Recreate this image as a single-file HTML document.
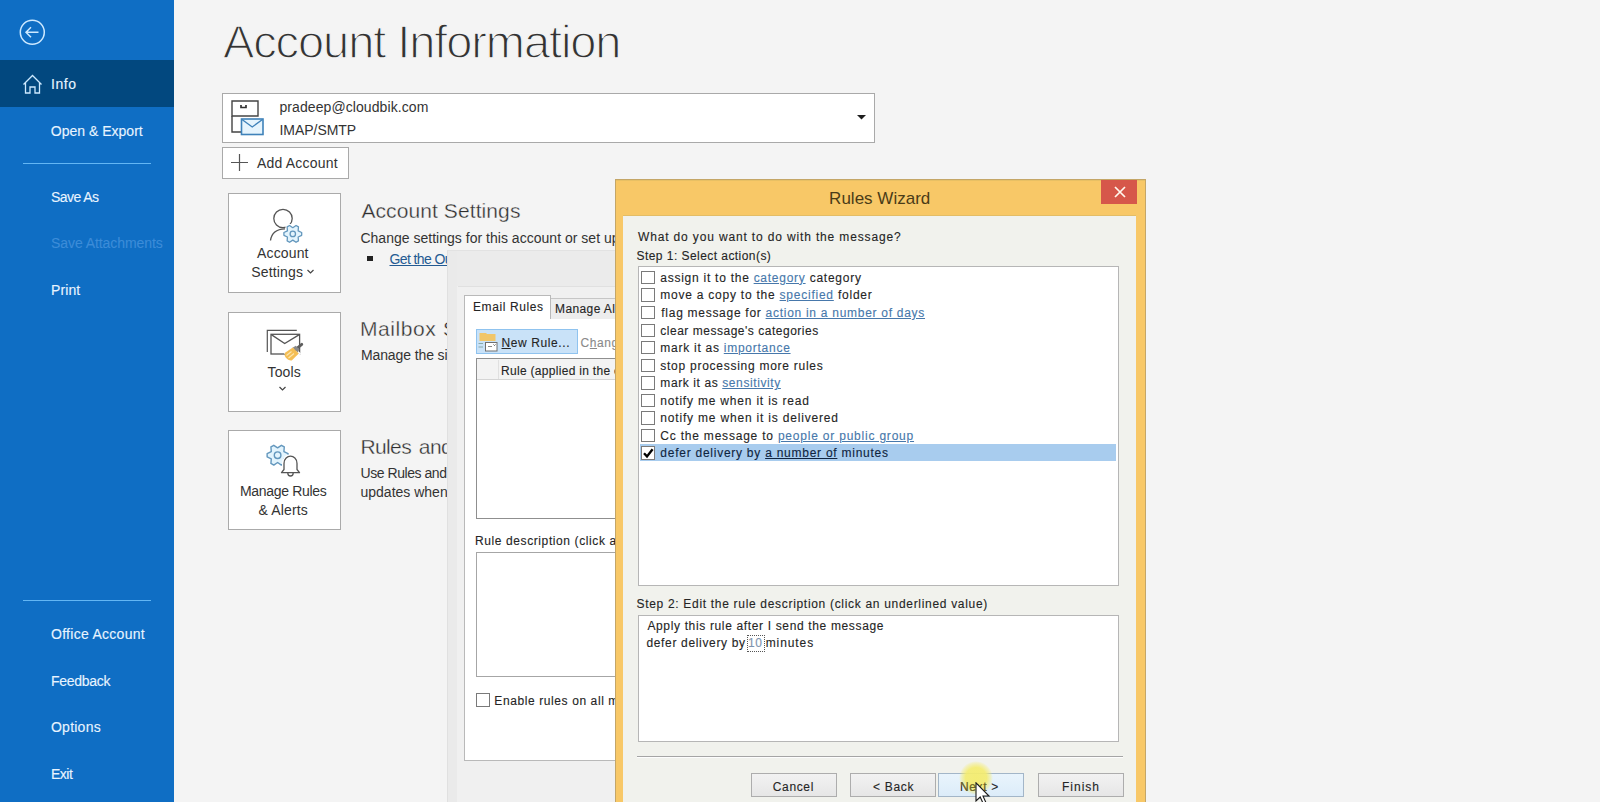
<!DOCTYPE html>
<html><head><meta charset="utf-8">
<style>
*{margin:0;padding:0;box-sizing:border-box}
html,body{width:1600px;height:802px;overflow:hidden;background:#f4f4f4;font-family:"Liberation Sans",sans-serif}
.a{position:absolute}
.t{position:absolute;white-space:nowrap;line-height:normal}
.d{-webkit-text-stroke:0.12px currentColor}
.sep{position:absolute;left:23px;width:128px;height:1.5px;background:#63b6f4}
.tile{position:absolute;left:228px;width:113px;height:100px;background:#fff;border:1px solid #aaaaaa}
.cb{position:absolute;width:14px;height:14px;border:1px solid #7a7a7a;background:#fff}
.lk{color:#4778ab;text-decoration:underline}
.lk2{color:#0f2440;text-decoration:underline}
.lk3{text-decoration:none}
.btn{position:absolute;top:773px;height:24px;background:linear-gradient(#f2f2f2,#e6e6e6);border:1px solid #adadad}
</style></head><body>

<!-- ============ Sidebar ============ -->
<div class="a" style="left:0;top:0;width:174px;height:802px;background:#0f6ec4"></div>
<div class="a" style="left:0;top:60px;width:174px;height:46.5px;background:#02487f"></div>
<svg class="a" style="left:0;top:0" width="175" height="110">
 <circle cx="32.3" cy="32.3" r="12" fill="none" stroke="#cde9ff" stroke-width="1.5"/>
 <path d="M26 32.3 H38.5 M31 27.3 L26 32.3 L31 37.3" fill="none" stroke="#cde9ff" stroke-width="1.5"/>
 <path d="M23.5 84.5 L32.5 75.5 L41.5 84.5 M25.5 83 V93 H30 V87 H35 V93 H39.5 V83" fill="none" stroke="#cde9ff" stroke-width="1.3"/>
</svg>
<div class="sep" style="top:162.8px"></div>
<div class="sep" style="top:599.5px"></div>
<div class="t d" style="left:51.0px;top:76.2px;font-size:14px;color:#e8f4ff;letter-spacing:0.567px;">Info</div>
<div class="t d" style="left:50.8px;top:122.8px;font-size:14px;color:#e8f4ff;letter-spacing:0.008px;">Open &amp; Export</div>
<div class="t d" style="left:51.0px;top:188.7px;font-size:14px;color:#e8f4ff;letter-spacing:-0.567px;">Save As</div>
<div class="t d" style="left:51.0px;top:235.0px;font-size:14px;color:#3c8cd8;letter-spacing:-0.073px;">Save Attachments</div>
<div class="t d" style="left:51.0px;top:282.2px;font-size:14px;color:#e8f4ff;letter-spacing:0.100px;">Print</div>
<div class="t d" style="left:51.0px;top:625.9px;font-size:14px;color:#e8f4ff;letter-spacing:0.285px;">Office Account</div>
<div class="t d" style="left:51.0px;top:672.7px;font-size:14px;color:#e8f4ff;letter-spacing:-0.286px;">Feedback</div>
<div class="t d" style="left:51.0px;top:719.1px;font-size:14px;color:#e8f4ff;letter-spacing:0.233px;">Options</div>
<div class="t d" style="left:51.0px;top:765.6px;font-size:14px;color:#e8f4ff;letter-spacing:-0.500px;">Exit</div>

<!-- ============ Main ============ -->
<div class="a" style="left:222px;top:93px;width:653px;height:50px;background:#fff;border:1px solid #a9a9a9"></div>
<svg class="a" style="left:228px;top:97px" width="40" height="42">
 <path d="M4 4 H30 V19 H4 Z" fill="none" stroke="#444" stroke-width="1.4"/>
 <path d="M4 19 V35 H13" fill="none" stroke="#444" stroke-width="1.4"/>
 <path d="M13 8 V10.5 H18 V8" fill="none" stroke="#333" stroke-width="1.7"/>
 <rect x="13.5" y="22" width="21.5" height="15.5" fill="#e6f4fd" stroke="#3f82ba" stroke-width="1.6"/>
 <path d="M14 22.5 L24.25 30 L34.5 22.5" fill="none" stroke="#3f82ba" stroke-width="1.4"/>
</svg>
<svg class="a" style="left:855px;top:113px" width="14" height="9"><path d="M2 2 H11 L6.5 6.5 Z" fill="#1e1e1e"/></svg>

<div class="a" style="left:222px;top:147px;width:127px;height:32px;background:#fff;border:1px solid #a9a9a9"></div>
<svg class="a" style="left:229px;top:152px" width="21" height="21"><path d="M10.5 2 V19 M2 10.5 H19" stroke="#555" stroke-width="1.2"/></svg>

<div class="tile" style="top:193px"></div>
<div class="tile" style="top:311.5px"></div>
<div class="tile" style="top:429.5px"></div>

<!-- account settings icon -->
<svg class="a" style="left:262px;top:203px" width="44" height="44">
 <circle cx="21" cy="15.5" r="9.2" fill="none" stroke="#555" stroke-width="1.3"/>
 <path d="M8.5 37.5 C9.5 29.5 15.5 26 23 25.8" fill="none" stroke="#555" stroke-width="1.3"/>
 <g transform="translate(30.8,30.9)" fill="none" stroke="#6397bd" stroke-width="1.3" stroke-linejoin="round">
  <path d="M8.89 -1.41 L8.89 1.41 L5.37 3.10 L5.66 6.99 L3.23 8.40 L0.00 6.20 L-3.23 8.40 L-5.66 6.99 L-5.37 3.10 L-8.89 1.41 L-8.89 -1.41 L-5.37 -3.10 L-5.66 -6.99 L-3.23 -8.40 L-0.00 -6.20 L3.23 -8.40 L5.66 -6.99 L5.37 -3.10 Z" stroke="#fff" stroke-width="3.5"/>
  <path d="M8.89 -1.41 L8.89 1.41 L5.37 3.10 L5.66 6.99 L3.23 8.40 L0.00 6.20 L-3.23 8.40 L-5.66 6.99 L-5.37 3.10 L-8.89 1.41 L-8.89 -1.41 L-5.37 -3.10 L-5.66 -6.99 L-3.23 -8.40 L-0.00 -6.20 L3.23 -8.40 L5.66 -6.99 L5.37 -3.10 Z" fill="#e3f4fd"/>
  <circle cx="0" cy="0" r="2.7"/>
 </g>
</svg>
<svg class="a" style="left:306px;top:268px" width="10" height="8"><path d="M1.5 2 L4.5 5 L7.5 2" fill="none" stroke="#444" stroke-width="1.2"/></svg>

<!-- tools icon -->
<svg class="a" style="left:262px;top:326px" width="44" height="38">
 <path d="M5.3 26 V4.4 H34.8" fill="none" stroke="#555" stroke-width="1.2"/>
 <rect x="9" y="8.3" width="28.6" height="19.7" fill="#fff" stroke="#555" stroke-width="1.3"/>
 <path d="M9.3 8.6 L22.7 17.6 L37.3 8.6" fill="none" stroke="#555" stroke-width="1.3"/>
 <path d="M21.5 26.5 L31.5 20.5 L39 27.5 L30 36 Z" fill="#fff"/>
 <path d="M33.5 23.5 L39.8 18.3" stroke="#5d5d5d" stroke-width="2.8" stroke-linecap="round"/>
 <path d="M30.5 21.8 L33.8 19.8 L37.5 23.4 L35.8 26.5 Z" fill="#8a8a8a"/>
 <path d="M23 26.8 L30.8 21.6 L36.8 27.5 L30 34.3 C27 35.3 23.5 32 22.6 29.5 Z" fill="#f4be55"/>
 <path d="M24.5 29.5 L29.5 25.5 M26.5 32 L32 27.5" stroke="#fbe7b4" stroke-width="1.1"/>
</svg>
<svg class="a" style="left:278px;top:385px" width="10" height="8"><path d="M1.5 2 L4.5 5 L7.5 2" fill="none" stroke="#444" stroke-width="1.2"/></svg>

<!-- manage rules icon -->
<svg class="a" style="left:262px;top:440px" width="44" height="42">
 <g transform="translate(15.6,15.2)" fill="none" stroke="#6397bd" stroke-width="1.4" stroke-linejoin="round">
  <path d="M10.47 -1.66 L10.47 1.66 L6.32 3.65 L6.67 8.24 L3.80 9.90 L0.00 7.30 L-3.80 9.90 L-6.67 8.24 L-6.32 3.65 L-10.47 1.66 L-10.47 -1.66 L-6.32 -3.65 L-6.67 -8.24 L-3.80 -9.90 L-0.00 -7.30 L3.80 -9.90 L6.67 -8.24 L6.32 -3.65 Z" fill="#e3f4fd"/>
  <circle cx="0" cy="0" r="3.3"/>
 </g>
 <path d="M19.5 32.7 H37.5 L35 29.5 V23.5 C35 18.5 31.5 16.2 28.5 16.2 C25.5 16.2 22 18.5 22 23.5 V29.5 Z" fill="#fff" stroke="#fff" stroke-width="4" stroke-linejoin="round"/>
 <path d="M19.5 32.7 H37.5 L35 29.5 V23.5 C35 18.5 31.5 16.2 28.5 16.2 C25.5 16.2 22 18.5 22 23.5 V29.5 Z" fill="#fff" stroke="#555" stroke-width="1.3" stroke-linejoin="round"/>
 <path d="M25.8 33 C25.8 37 31.2 37 31.2 33" fill="none" stroke="#555" stroke-width="1.3"/>
</svg>

<div class="a" style="left:366.5px;top:255.5px;width:6px;height:5.5px;background:#222"></div>
<div class="t" style="left:222.9px;top:14.3px;font-size:47px;color:#333;letter-spacing:-1.078px;-webkit-text-stroke:1.3px #f4f4f4;">Account Information</div>
<div class="t" style="left:279.5px;top:98.7px;font-size:14px;color:#333;letter-spacing:0.079px;">pradeep@cloudbik.com</div>
<div class="t" style="left:279.5px;top:121.5px;font-size:14px;color:#333;letter-spacing:-0.038px;">IMAP/SMTP</div>
<div class="t" style="left:257.0px;top:155.2px;font-size:14px;color:#333;letter-spacing:0.200px;">Add Account</div>
<div class="t" style="left:257.0px;top:245.4px;font-size:14px;color:#333;letter-spacing:0.150px;">Account</div>
<div class="t" style="left:251.2px;top:263.7px;font-size:14px;color:#333;letter-spacing:0.171px;">Settings</div>
<div class="t" style="left:267.6px;top:363.6px;font-size:14px;color:#333;letter-spacing:0.100px;">Tools</div>
<div class="t" style="left:240.0px;top:483.0px;font-size:14px;color:#333;letter-spacing:-0.318px;">Manage Rules</div>
<div class="t" style="left:258.6px;top:501.5px;font-size:14px;color:#333;letter-spacing:0.129px;">&amp; Alerts</div>
<div class="t" style="left:361.4px;top:199.0px;font-size:21px;color:#2e2e2e;letter-spacing:0.093px;-webkit-text-stroke:0.35px #f4f4f4;">Account Settings</div>
<div class="t" style="left:360.4px;top:229.5px;font-size:14px;color:#333;letter-spacing:0.020px;">Change settings for this account or set up</div>
<div class="t" style="left:389.5px;top:250.9px;font-size:14px;color:#235a92;letter-spacing:-0.600px;text-decoration:underline;">Get the Outlook app</div>
<div class="t" style="left:359.9px;top:316.6px;font-size:21px;color:#2e2e2e;letter-spacing:0.600px;-webkit-text-stroke:0.35px #f4f4f4;">Mailbox Settings</div>
<div class="t" style="left:360.9px;top:346.7px;font-size:14px;color:#333;letter-spacing:-0.100px;">Manage the size of your mailbox</div>
<div class="t" style="left:360.4px;top:434.7px;font-size:21px;color:#2e2e2e;letter-spacing:-0.600px;word-spacing:2.5px;-webkit-text-stroke:0.35px #f4f4f4;">Rules and Alerts</div>
<div class="t" style="left:360.5px;top:465.4px;font-size:14px;color:#333;letter-spacing:-0.450px;">Use Rules and Alerts to help organize</div>
<div class="t" style="left:360.5px;top:484.0px;font-size:14px;color:#333;letter-spacing:0.000px;">updates when items are added</div>

<!-- ============ Back dialog (Rules and Alerts) ============ -->
<div class="a" style="left:447px;top:250px;width:200px;height:552px;background:#f0f0f0;border-left:1px solid #e0e0e0;border-top:1px solid #e2e2e2"></div>
<div class="a" style="left:457px;top:251px;width:200px;height:35px;background:#ebebeb"></div>
<div class="a" style="left:448px;top:251px;width:8.5px;height:551px;background:#eaeaea"></div>
<div class="a" style="left:458px;top:286px;width:200px;height:1px;background:#e0e0e0"></div>
<div class="a" style="left:464px;top:318px;width:200px;height:443px;background:#fff;border:1px solid #b9b9b9"></div>
<div class="a" style="left:550px;top:298px;width:100px;height:21px;background:#ededed;border:1px solid #c6c6c6;border-bottom:none"></div>
<div class="a" style="left:464px;top:295px;width:87px;height:24px;background:#fff;border:1px solid #b9b9b9;border-bottom:none"></div>
<div class="a" style="left:475.5px;top:329px;width:102px;height:25px;background:#c9e2f8;border:1px solid #8fc3ef"></div>
<svg class="a" style="left:477px;top:330px" width="24" height="24">
 <path d="M2.5 3 H9 L10 4 H18.5 V11 H2.5 Z" fill="#f1c66a"/>
 <rect x="8.5" y="12.5" width="11.5" height="8.5" fill="#fff" stroke="#707070" stroke-width="1"/>
 <path d="M11 16.5 H15" stroke="#888" stroke-width="1"/>
 <path d="M16.5 14.5 L17.5 15.5 L18.5 14.5" stroke="#555" stroke-width="1" fill="none"/>
 <path d="M1.5 13.5 H6 M1.5 17 H6" stroke="#8aa" stroke-width="1"/>
</svg>
<div class="a" style="left:476px;top:358px;width:200px;height:161px;background:#fff;border:1px solid #8f8f8f"></div>
<div class="a" style="left:477px;top:359px;width:200px;height:20.5px;background:#f3f3f3;border-bottom:1px solid #d5d5d5"></div>
<div class="a" style="left:498px;top:360px;width:1px;height:19px;background:#e0e0e0"></div>
<div class="a" style="left:476px;top:551.5px;width:200px;height:125px;background:#fff;border:1px solid #a6a6a6"></div>
<div class="cb" style="left:475.7px;top:692.6px;width:14.5px;height:14.5px"></div>
<div class="t d" style="left:473.0px;top:300.0px;font-size:12px;color:#252525;letter-spacing:0.600px;">Email Rules</div>
<div class="t d" style="left:555.0px;top:302.0px;font-size:12px;color:#252525;letter-spacing:0.400px;">Manage Alerts</div>
<div class="t d" style="left:501.5px;top:335.5px;font-size:12px;color:#252525;letter-spacing:0.600px;"><u>N</u>ew Rule...</div>
<div class="t d" style="left:580.5px;top:335.5px;font-size:12px;color:#8a8a8a;letter-spacing:0.600px;">C<u>h</u>ange Rule</div>
<div class="t d" style="left:501.0px;top:363.5px;font-size:12px;color:#252525;letter-spacing:0.300px;">Rule (applied in the order shown)</div>
<div class="t d" style="left:475.0px;top:534.0px;font-size:12px;color:#252525;letter-spacing:0.600px;">Rule description (click an underlined value to edit):</div>
<div class="t d" style="left:494.3px;top:694.0px;font-size:12px;color:#252525;letter-spacing:0.600px;">Enable rules on all messages</div>

<!-- ============ Rules Wizard ============ -->
<div class="a" style="left:615px;top:179px;width:531px;height:630px;background:#f8c867;border:1px solid #c4a667"></div>
<div class="a" style="left:616px;top:180px;width:529px;height:1px;background:#e8c064"></div>
<div class="a" style="left:1101px;top:180px;width:36px;height:24px;background:#d6574a"></div>
<svg class="a" style="left:1113px;top:185.4px" width="14" height="14"><path d="M2 2 L12 12 M12 2 L2 12" stroke="#fff8ee" stroke-width="1.7"/></svg>
<div class="a" style="left:623px;top:214.5px;width:513px;height:600px;background:#f1f2ed;border-top:1px solid #e3bd66"></div>
<div class="a" style="left:637.5px;top:266px;width:481px;height:320px;background:#fff;border:1px solid #b6b6b6"></div>
<div class="a" style="left:640px;top:444px;width:476px;height:17px;background:#a8ccee"></div>
<div class="cb" style="left:641px;top:270.9px;width:13.8px;height:13.4px"></div>
<div class="cb" style="left:641px;top:288.45px;width:13.8px;height:13.4px"></div>
<div class="cb" style="left:641px;top:306.0px;width:13.8px;height:13.4px"></div>
<div class="cb" style="left:641px;top:323.54999999999995px;width:13.8px;height:13.4px"></div>
<div class="cb" style="left:641px;top:341.09999999999997px;width:13.8px;height:13.4px"></div>
<div class="cb" style="left:641px;top:358.65px;width:13.8px;height:13.4px"></div>
<div class="cb" style="left:641px;top:376.2px;width:13.8px;height:13.4px"></div>
<div class="cb" style="left:641px;top:393.75px;width:13.8px;height:13.4px"></div>
<div class="cb" style="left:641px;top:411.29999999999995px;width:13.8px;height:13.4px"></div>
<div class="cb" style="left:641px;top:428.85px;width:13.8px;height:13.4px"></div>
<div class="cb" style="left:641px;top:446.4px;width:13.8px;height:13.4px"><svg style="position:absolute;left:0;top:0" width="12" height="12"><path d="M2 6.2 L5 9.4 L10.6 2.2" fill="none" stroke="#000" stroke-width="2.3"/></svg></div>
<div class="a" style="left:637.5px;top:614.5px;width:481px;height:127px;background:#fff;border:1px solid #b6b6b6"></div>
<div class="a" style="left:746.5px;top:634.5px;width:18.5px;height:17px;border:1px dotted #555"></div>
<div class="a" style="left:637px;top:755.5px;width:486px;height:2px;border-top:1px solid #a5a5a5;border-bottom:1px solid #fdfdfd"></div>
<div class="btn" style="left:751px;width:85.5px"></div>
<div class="btn" style="left:850px;width:85.5px"></div>
<div class="btn" style="left:938px;width:85.5px;background:linear-gradient(#e9f4fc,#dcecf9);border-color:#a3b6c8"></div>
<div class="btn" style="left:1038px;width:85.5px"></div>
<div class="t" style="left:829.1px;top:188.6px;font-size:17px;color:#4a3c18;letter-spacing:0.009px;">Rules Wizard</div>
<div class="t d" style="left:638.0px;top:229.6px;font-size:12px;color:#252525;letter-spacing:0.851px;">What do you want to do with the message?</div>
<div class="t d" style="left:636.5px;top:248.7px;font-size:12px;color:#252525;letter-spacing:0.448px;">Step 1: Select action(s)</div>
<div class="t d" style="left:660.3px;top:270.9px;font-size:12px;color:#252525;letter-spacing:0.742px;">assign it to the <span class="lk">category</span> category</div>
<div class="t d" style="left:660.3px;top:288.4px;font-size:12px;color:#252525;letter-spacing:0.765px;">move a copy to the <span class="lk">specified</span> folder</div>
<div class="t d" style="left:661.3px;top:306.0px;font-size:12px;color:#252525;letter-spacing:0.719px;">flag message for <span class="lk">action in a number of days</span></div>
<div class="t d" style="left:660.3px;top:323.5px;font-size:12px;color:#252525;letter-spacing:0.516px;">clear message's categories</div>
<div class="t d" style="left:660.3px;top:341.1px;font-size:12px;color:#252525;letter-spacing:0.740px;">mark it as <span class="lk">importance</span></div>
<div class="t d" style="left:660.3px;top:358.6px;font-size:12px;color:#252525;letter-spacing:0.736px;">stop processing more rules</div>
<div class="t d" style="left:660.3px;top:376.2px;font-size:12px;color:#252525;letter-spacing:0.600px;">mark it as <span class="lk">sensitivity</span></div>
<div class="t d" style="left:660.3px;top:393.8px;font-size:12px;color:#252525;letter-spacing:0.804px;">notify me when it is read</div>
<div class="t d" style="left:660.3px;top:411.3px;font-size:12px;color:#252525;letter-spacing:0.814px;">notify me when it is delivered</div>
<div class="t d" style="left:660.3px;top:428.9px;font-size:12px;color:#252525;letter-spacing:0.790px;">Cc the message to <span class="lk">people or public group</span></div>
<div class="t d" style="left:660.3px;top:446.4px;font-size:12px;color:#0f2440;letter-spacing:0.747px;">defer delivery by <span class="lk2">a number of</span> minutes</div>
<div class="t d" style="left:636.5px;top:597.3px;font-size:12px;color:#252525;letter-spacing:0.688px;">Step 2: Edit the rule description (click an underlined value)</div>
<div class="t d" style="left:647.4px;top:619.4px;font-size:12px;color:#252525;letter-spacing:0.649px;">Apply this rule after I send the message</div>
<div class="t d" style="left:646.4px;top:636.4px;font-size:12px;color:#252525;letter-spacing:0.663px;">defer delivery by</div>
<div class="t d" style="left:748.0px;top:636.4px;font-size:12px;color:#7d93ad;letter-spacing:0.600px;"><span class="lk3">10</span></div>
<div class="t d" style="left:765.7px;top:636.4px;font-size:12px;color:#252525;letter-spacing:0.917px;">minutes</div>
<div class="t d" style="left:772.8px;top:779.6px;font-size:12px;color:#252525;letter-spacing:0.640px;">Cancel</div>
<div class="t d" style="left:873.0px;top:779.6px;font-size:12px;color:#252525;letter-spacing:0.680px;">&lt; Back</div>
<div class="t d" style="left:960.0px;top:779.6px;font-size:12px;color:#252525;letter-spacing:0.640px;">Next &gt;</div>
<div class="t d" style="left:1062.0px;top:779.6px;font-size:12px;color:#252525;letter-spacing:1.000px;">Finish</div>
<!-- cursor highlight -->
<div class="a" style="left:959px;top:761px;width:34px;height:34px;border-radius:50%;background:radial-gradient(closest-side,rgba(244,236,110,0.95),rgba(244,236,110,0.9) 62%,rgba(244,236,110,0.35) 88%,rgba(244,236,110,0) 100%)"></div>
<div class="t d" style="left:960.0px;top:779.6px;font-size:12px;color:#6e6628;letter-spacing:0.640px;clip-path:circle(15px at 16px 0px)">Next &gt;</div>
<svg class="a" style="left:975px;top:782px" width="18" height="24" viewBox="0 0 18 24">
 <path d="M1 0.8 V19 L5.2 15 L8.4 22 L11 20.8 L8 14 L14 14 Z" fill="#fff" stroke="#1a1a1a" stroke-width="1.1" stroke-linejoin="miter"/>
</svg>
</body></html>
